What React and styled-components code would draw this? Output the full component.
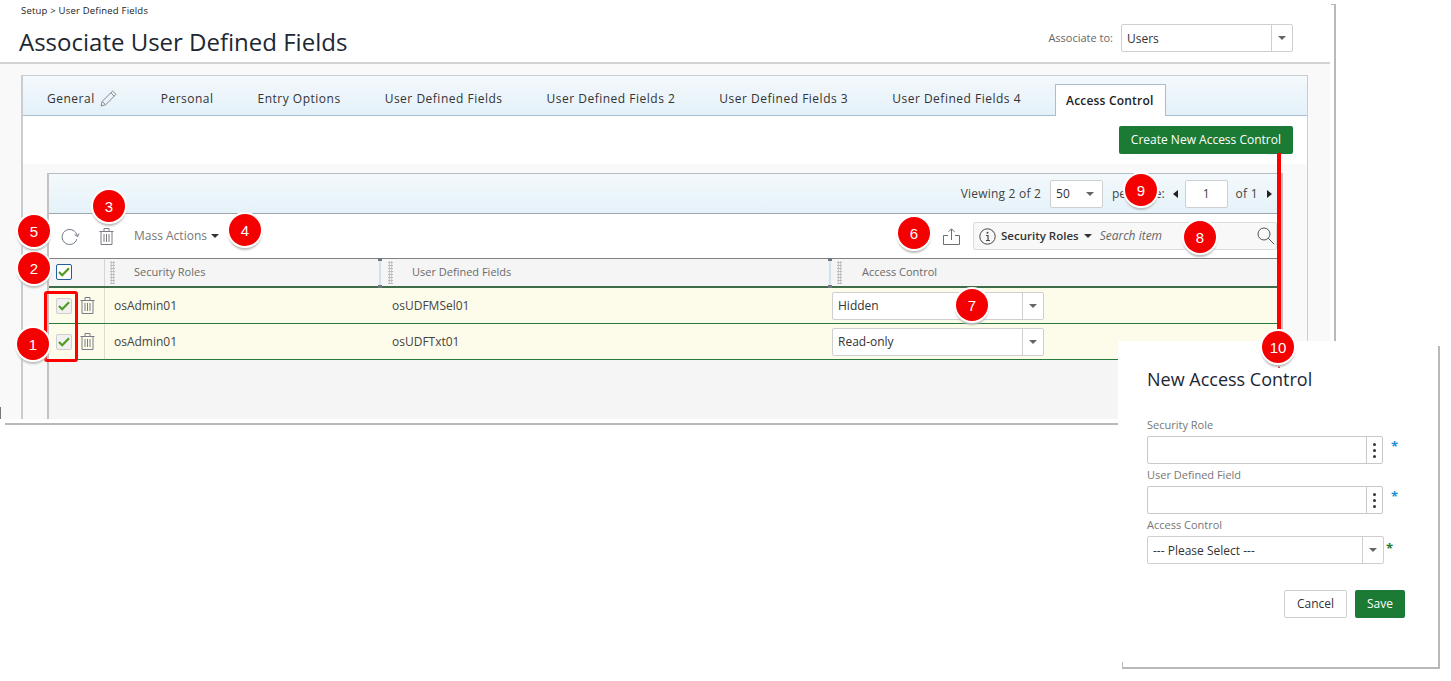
import React from "react";
import styled, { createGlobalStyle } from "styled-components";

const Global = createGlobalStyle`
  html, body { margin: 0; padding: 0; background: #fff; }
  body { font-family: "Open Sans", "Liberation Sans", sans-serif; color: #333; }
  * { box-sizing: border-box; }
`;

const Stage = styled.div`
  position: relative;
  width: 1451px;
  height: 681px;
  overflow: hidden;
`;
const Shot = styled.div`
  position: relative;
  width: 1336px;
  height: 425px;
  &::after {
    content: "";
    position: absolute;
    left: 5px; top: 4px; right: 0; bottom: 0;
    border-right: 2px solid #b9b9b9;
    border-bottom: 2px solid #b9b9b9;
    pointer-events: none;
  }
  &::before {
    content: "";
    position: absolute;
    right: 0; top: 4px;
    width: 5px; height: 1px;
    background: #b9b9b9;
  }
`;
const Page = styled.div`
  width: 1330px;
  height: 419px;
  display: flex;
  flex-direction: column;
`;
const Header = styled.header`
  height: 64px;
  flex: none;
  display: flex;
  justify-content: space-between;
  border-bottom: 2px solid #d2d2d2;
  padding: 0 37px 0 19px;
`;
const TitleBlock = styled.div`
  display: flex;
  flex-direction: column;
`;
const Crumb = styled.div`
  font-size: 9.5px;
  letter-spacing: 0.2px;
  line-height: 12px;
  margin: 5px 0 0 2px;
  color: #222;
`;
const Title = styled.h1`
  margin: 8px 0 0;
  font-size: 24px;
  line-height: 34px;
  font-weight: 400;
  color: #1d2733;
`;
const Assoc = styled.div`
  display: flex;
  align-items: center;
  gap: 8px;
  height: 28px;
  margin-top: 24px;
`;
const AssocLabel = styled.span`
  font-size: 11px;
  color: #666;
  margin-top: -2px;
`;
const SelectBox = styled.div`
  width: ${(p) => p.$w}px;
  height: 28px;
  flex: none;
  display: flex;
  align-items: stretch;
  background: #fff;
  border: 1px solid #cfcfcf;
  border-radius: 2px;
  font-size: 12px;
  color: #333;
  margin-left: ${(p) => p.$ml || 0}px;
`;
const SelectText = styled.span`
  flex: 1;
  display: flex;
  align-items: center;
  padding-left: 5px;
  white-space: nowrap;
`;
const SelectToggle = styled.span`
  width: ${(p) => p.$w || 21}px;
  display: flex;
  align-items: center;
  justify-content: center;
  border-left: ${(p) => (p.$plain ? "0" : "1px solid #cfcfcf")};
`;
const Caret = styled.i`
  display: inline-block;
  width: 0;
  height: 0;
  flex: none;
  margin-left: ${(p) => p.$ml || 0}px;
  border-left: 4px solid transparent;
  border-right: 4px solid transparent;
  border-top: 4px solid ${(p) => p.$c || "#666"};
`;
const Body = styled.div`
  flex: 1;
  min-height: 0;
  display: flex;
  background: #f9f9f9;
  padding: 11px 22px 0 21px;
`;
const Panel = styled.div`
  flex: 1;
  display: flex;
  flex-direction: column;
  border: 1px solid #c7ced3;
  border-bottom: 0;
  border-left-width: 2px;
`;
const Tabs = styled.nav`
  height: 40px;
  flex: none;
  display: flex;
  background: linear-gradient(#f4f9fc, #e4f1f9);
  border-bottom: 1px solid #a8bdd0;
  padding-left: 2px;
`;
const Tab = styled.div`
  padding: 0 22px;
  height: 39px;
  display: flex;
  align-items: center;
  gap: 5px;
  font-size: 12px;
  letter-spacing: 0.5px;
  color: #333;
  padding-top: 6px;
  white-space: nowrap;
`;
const ActiveTab = styled.div`
  margin-left: 12px;
  margin-top: 8px;
  height: 32px;
  padding: 0 11px 0 10px;
  display: flex;
  align-items: center;
  background: #fff;
  border: 1px solid #a8bdd0;
  border-bottom: 0;
  font-size: 12px;
  font-weight: 600;
  letter-spacing: 0.2px;
  color: #222;
  white-space: nowrap;
`;
const ActionRow = styled.div`
  height: 48px;
  flex: none;
  background: #fff;
  display: flex;
  justify-content: flex-end;
  padding: 10px 14px 0 0;
`;
const PrimaryButton = styled.button`
  height: 28px;
  padding: 0 12px 2px;
  border: 0;
  border-radius: 2px;
  background: #1b7a34;
  color: #fff;
  font-family: inherit;
  font-size: 12px;
`;
const GridWrap = styled.div`
  flex: 1;
  min-height: 0;
  display: flex;
  padding: 9px 24px 0 24px;
`;
const Grid = styled.section`
  flex: 1;
  display: flex;
  flex-direction: column;
  background: #f5f5f5;
  border-left: 2px solid #c3c3c3;
  border-right: 2px solid #c3c3c3;
`;
const Pager = styled.div`
  height: 41px;
  flex: none;
  display: flex;
  align-items: center;
  justify-content: flex-end;
  font-size: 12px;
  color: #444;
  background: linear-gradient(#f3f9fc, #e5f2f9);
  border-top: 1px solid #b5bcc2;
  border-bottom: 1px solid #9fa6ab;
  padding-right: 9px;
`;
const PagerText = styled.span`
  margin: ${(p) => p.$m || 0};
  letter-spacing: ${(p) => p.$ls || 0}px;
  white-space: nowrap;
`;
const PageInput = styled.div`
  width: 43px;
  height: 28px;
  margin: 0 8px 0 7px;
  background: #fff;
  border: 1px solid #cfcfcf;
  border-radius: 2px;
  display: flex;
  align-items: center;
  justify-content: center;
`;
const SideCaret = styled.i`
  display: inline-block;
  width: 0;
  height: 0;
  border-top: 4px solid transparent;
  border-bottom: 4px solid transparent;
  ${(p) => (p.$left ? "border-right: 5px solid #222;" : "border-left: 5px solid #222;")}
`;
const Toolbar = styled.div`
  height: 44px;
  flex: none;
  display: flex;
  align-items: center;
  background: #fff;
  padding: 0 4px 0 12px;
`;
const ToolGap = styled.span`
  width: 19px;
  flex: none;
`;
const MassActions = styled.span`
  display: flex;
  align-items: center;
  gap: 4px;
  margin: -1px 0 0 20px;
  font-size: 12px;
  color: #777;
`;
const Spacer = styled.div`
  flex: 1;
`;
const SearchBox = styled.div`
  width: 304px;
  height: 28px;
  margin-left: 13px;
  display: flex;
  align-items: center;
  background: #f8f8f8;
  border: 1px solid #dcdcdc;
  border-radius: 2px;
  padding: 0 1px 0 5px;
`;
const SearchField = styled.span`
  margin: -1px 0 0 5px;
  font-size: 11.5px;
  font-weight: 600;
  color: #333;
  white-space: nowrap;
`;
const SearchHint = styled.span`
  flex: 1;
  font-size: 12px;
  font-style: italic;
  color: #666;
  margin: -1px 0 0 8px;
`;
const Row = styled.div`
  display: grid;
  grid-template-columns: 56px 275px 450px 1fr;
  flex: none;
`;
const HeadRow = styled(Row)`
  height: 30px;
  background: #f5f5f5;
  border-top: 1px solid #808080;
  border-bottom: 2px solid #3f6d4a;
`;
const DataRow = styled(Row)`
  height: 36px;
  background: #fdfcea;
  border-bottom: 1px solid #2a7a3c;
`;
const HeadCell = styled.div`
  position: relative;
  display: flex;
  align-items: center;
  font-size: 11px;
  color: #6b6b6b;
  padding: 0 0 2px ${(p) => p.$pad || 0}px;
  ${(p) => p.$divider && "border-right: 1px solid #d6d6d6;"}
`;
const Dots = styled.span`
  position: absolute;
  left: ${(p) => p.$x}px;
  top: 2px;
  bottom: 2px;
  width: 5px;
  background-image: radial-gradient(#bcbcbc 0.9px, transparent 1px);
  background-size: 2.5px 3px;
`;
const Resizer = styled.span`
  position: absolute;
  right: -1px;
  top: -1px;
  bottom: -2px;
  width: 2px;
  background: #cfe2ee;
  &::before, &::after {
    content: "";
    position: absolute;
    left: -1px;
    width: 4px;
    height: 3px;
    background: #6e7682;
  }
  &::before { top: 0; }
  &::after { bottom: 0; }
`;
const Cell = styled.div`
  display: flex;
  align-items: center;
  font-size: 12px;
  color: #444;
  padding-left: ${(p) => p.$pad || 0}px;
  gap: ${(p) => p.$gap || 0}px;
  ${(p) => p.$divider && "border-right: 1px solid #dcdccb;"}
`;
const Check = styled.span`
  width: 16px;
  height: 16px;
  flex: none;
  display: flex;
  align-items: center;
  justify-content: center;
  border-radius: 2px;
  background: ${(p) => (p.$head ? "#fff" : "#f1f1f1")};
  border: 1px solid ${(p) => (p.$head ? "#1f5f9e" : "#cfcfcf")};
`;
const Dialog = styled.aside`
  position: absolute;
  left: 1118px;
  top: 341px;
  width: 322px;
  height: 328px;
  background: #fff;
  padding: 26px 35px 0 29px;
  display: flex;
  flex-direction: column;
  &::after {
    content: "";
    position: absolute;
    left: 4px; top: 5px; right: 0; bottom: 0;
    border-right: 2px solid #b9b9b9;
    border-bottom: 2px solid #b9b9b9;
    pointer-events: none;
  }
  &::before {
    content: "";
    position: absolute;
    left: 4px; bottom: 0;
    width: 1px;
    height: 7px;
    background: #b9b9b9;
  }
`;
const DialogTitle = styled.h2`
  margin: 0 0 26px;
  font-size: 18px;
  line-height: 24px;
  font-weight: 400;
  color: #1d2733;
`;
const FieldLabel = styled.label`
  display: block;
  font-size: 11px;
  line-height: 14px;
  height: 19px;
  padding-top: 1px;
  color: #777;
`;
const FieldRow = styled.div`
  display: flex;
  height: 31px;
  align-items: flex-start;
`;
const LookupBox = styled.div`
  width: 236px;
  height: 28px;
  display: flex;
  justify-content: flex-end;
  background: #fff;
  border: 1px solid #c9c9c9;
  border-radius: 2px;
`;
const LookupButton = styled.span`
  width: 16px;
  border-left: 1px solid #c9c9c9;
  display: flex;
  flex-direction: column;
  align-items: center;
  justify-content: center;
  gap: 3px;
  &::before, &::after, & > i {
    content: "";
    width: 3px;
    height: 3px;
    background: #333;
    border-radius: 50%;
  }
`;
const Star = styled.span`
  font-size: 13px;
  font-weight: 700;
  line-height: 14px;
  color: ${(p) => p.$c};
  margin: ${(p) => p.$m};
`;
const DialogActions = styled.div`
  display: flex;
  justify-content: flex-end;
  gap: 8px;
  margin-top: 23px;
`;
const CancelButton = styled.button`
  width: 63px;
  height: 28px;
  padding-bottom: 2px;
  background: #fff;
  border: 1px solid #cfcfcf;
  border-radius: 2px;
  font-family: inherit;
  font-size: 12px;
  color: #333;
`;
const RedBox = styled.div`
  position: absolute;
  left: 44px;
  top: 291px;
  width: 34px;
  height: 71px;
  border: 3px solid #f00;
  border-radius: 3px;
`;
const RedLine = styled.div`
  position: absolute;
  left: 1277px;
  top: 153px;
  width: 4px;
  height: 215px;
  background: #f00;
`;
const RedTip = styled.div`
  position: absolute;
  left: 1278px;
  top: 366px;
  width: 2px;
  height: 2px;
  background: #e03030;
`;
const Badge = styled.div`
  position: absolute;
  left: ${(p) => p.$x - 16}px;
  top: ${(p) => p.$y - 16}px;
  width: 32px;
  height: 32px;
  border-radius: 50%;
  background: #f50000;
  color: #fff;
  font-family: "Liberation Sans", Arial, sans-serif;
  font-size: 15px;
  display: flex;
  align-items: center;
  justify-content: center;
  box-shadow: 0 0 0 2px #fff, 0 3px 2px 1px #bdbdbd;
`;
const EdgeTick = styled.div`
  position: absolute;
  left: 0;
  top: 407px;
  width: 1px;
  height: 12px;
  background: #777;
`;

const TrashIcon = ({ c = "#7b7b85" }) => (
  <svg width="15" height="17" viewBox="0 0 15 17" fill="none" stroke={c} strokeWidth="1">
    <path d="M.5 3.5h14M5 3.5V.5h5v3M2 3.5v13h11v-13M5 6v8M7.5 6v8M10 6v8" />
  </svg>
);
const CheckMark = () => (
  <svg width="12" height="10" viewBox="0 0 12 10" fill="none" stroke="#4f9a1f" strokeWidth="2.2">
    <path d="M1 5l3.2 3.2L11 1.2" />
  </svg>
);
const Pencil = () => (
  <svg width="17" height="17" viewBox="0 0 17 17" fill="none" stroke="#888" strokeWidth="1">
    <path d="M1 16l1.2-4.6L12.6 1l3.4 3.4L5.6 14.8zM2.2 11.4l3.4 3.4M10.8 2.8l3.4 3.4" />
  </svg>
);
const Refresh = () => (
  <svg width="19" height="17" viewBox="0 0 19 17" fill="none" stroke="#6d7684" strokeWidth="1">
    <path d="M15.8 11.2A7.5 7.5 0 1 1 15.6 6.2L16.5 8" />
    <path d="M13.6 6.6l2.9 2 1.6-3.1" />
  </svg>
);
const Export = () => (
  <svg width="17" height="17" viewBox="0 0 17 17" fill="none" stroke="#6f6f6f" strokeWidth="1">
    <path d="M5 7.5H.5v9h16v-9H12M8.5 12V1M5.5 3.8l3-3 3 3" />
  </svg>
);
const Info = () => (
  <svg width="17" height="17" viewBox="0 0 17 17" fill="none" stroke="#444">
    <circle cx="8.5" cy="8.5" r="7.7" strokeWidth="1" />
    <path d="M7 7.5h2v5M7 12.5h4" strokeWidth="1.2" />
    <circle cx="8.5" cy="4.8" r="1" fill="#444" stroke="none" />
  </svg>
);
const Search = () => (
  <svg width="18" height="18" viewBox="0 0 18 18" fill="none" stroke="#555" strokeWidth="1">
    <circle cx="7" cy="7" r="6" />
    <path d="M11.3 11.3l6 6" />
  </svg>
);

const tabs = ["Personal", "Entry Options", "User Defined Fields", "User Defined Fields 2", "User Defined Fields 3", "User Defined Fields 4"];
const rows = [
  ["osAdmin01", "osUDFMSel01", "Hidden"],
  ["osAdmin01", "osUDFTxt01", "Read-only"],
];
const badges = [
  [1, 33, 344], [2, 34, 268], [3, 109, 206], [4, 245, 230], [5, 34, 231],
  [6, 914, 233], [7, 972, 305], [8, 1200, 237], [9, 1141, 190], [10, 1278, 347],
];

export default function App() {
  return (
    <Stage>
      <Global />
      <Shot>
        <Page>
          <Header>
            <TitleBlock>
              <Crumb>Setup &gt; User Defined Fields</Crumb>
              <Title>Associate User Defined Fields</Title>
            </TitleBlock>
            <Assoc>
              <AssocLabel>Associate to:</AssocLabel>
              <SelectBox $w={172}>
                <SelectText>Users</SelectText>
                <SelectToggle><Caret /></SelectToggle>
              </SelectBox>
            </Assoc>
          </Header>
          <Body>
            <Panel>
              <Tabs>
                <Tab>General <Pencil /></Tab>
                {tabs.map((t) => <Tab key={t}>{t}</Tab>)}
                <ActiveTab>Access Control</ActiveTab>
              </Tabs>
              <ActionRow>
                <PrimaryButton>Create New Access Control</PrimaryButton>
              </ActionRow>
              <GridWrap>
                <Grid>
                  <Pager>
                    <PagerText $ls={0.2}>Viewing 2 of 2</PagerText>
                    <SelectBox $w={53} $ml={9}>
                      <SelectText>50</SelectText>
                      <SelectToggle $w={24} $plain><Caret /></SelectToggle>
                    </SelectBox>
                    <PagerText $m="0 8px 0 9px">per page:</PagerText>
                    <SideCaret $left />
                    <PageInput>1</PageInput>
                    <PagerText $m="0 9px 0 0" $ls={0.3}>of 1</PagerText>
                    <SideCaret />
                  </Pager>
                  <Toolbar>
                    <Refresh />
                    <ToolGap />
                    <TrashIcon />
                    <MassActions>Mass Actions <Caret $c="#333" /></MassActions>
                    <Spacer />
                    <Export />
                    <SearchBox>
                      <Info />
                      <SearchField>Security Roles</SearchField>
                      <Caret $c="#333" $ml={5} />
                      <SearchHint>Search item</SearchHint>
                      <Search />
                    </SearchBox>
                  </Toolbar>
                  <HeadRow>
                    <HeadCell $divider $pad={7}><Check $head><CheckMark /></Check></HeadCell>
                    <HeadCell $pad={29}><Dots $x={5} />Security Roles<Resizer /></HeadCell>
                    <HeadCell $pad={32}><Dots $x={8} />User Defined Fields<Resizer /></HeadCell>
                    <HeadCell $pad={32}><Dots $x={7} />Access Control</HeadCell>
                  </HeadRow>
                  {rows.map(([a, b, c]) => (
                    <DataRow key={b}>
                      <Cell $divider $pad={7} $gap={8}><Check><CheckMark /></Check><TrashIcon /></Cell>
                      <Cell $pad={9}>{a}</Cell>
                      <Cell $pad={12}>{b}</Cell>
                      <Cell $pad={2}>
                        <SelectBox $w={212}>
                          <SelectText>{c}</SelectText>
                          <SelectToggle><Caret /></SelectToggle>
                        </SelectBox>
                      </Cell>
                    </DataRow>
                  ))}
                </Grid>
              </GridWrap>
            </Panel>
          </Body>
        </Page>
      </Shot>
      <EdgeTick />
      <RedBox />
      <RedLine />
      <Dialog>
        <DialogTitle>New Access Control</DialogTitle>
        <FieldLabel>Security Role</FieldLabel>
        <FieldRow>
          <LookupBox><LookupButton><i /></LookupButton></LookupBox>
          <Star $c="#1c8fd6" $m="3px 0 0 8px">*</Star>
        </FieldRow>
        <FieldLabel>User Defined Field</FieldLabel>
        <FieldRow>
          <LookupBox><LookupButton><i /></LookupButton></LookupBox>
          <Star $c="#1c8fd6" $m="3px 0 0 8px">*</Star>
        </FieldRow>
        <FieldLabel>Access Control</FieldLabel>
        <FieldRow>
          <SelectBox $w={237}>
            <SelectText>--- Please Select ---</SelectText>
            <SelectToggle><Caret /></SelectToggle>
          </SelectBox>
          <Star $c="#1b7a34" $m="5px 0 0 2px">*</Star>
        </FieldRow>
        <DialogActions>
          <CancelButton>Cancel</CancelButton>
          <PrimaryButton>Save</PrimaryButton>
        </DialogActions>
      </Dialog>
      <RedTip />
      {badges.map(([n, x, y]) => <Badge key={n} $x={x} $y={y}>{n}</Badge>)}
    </Stage>
  );
}
